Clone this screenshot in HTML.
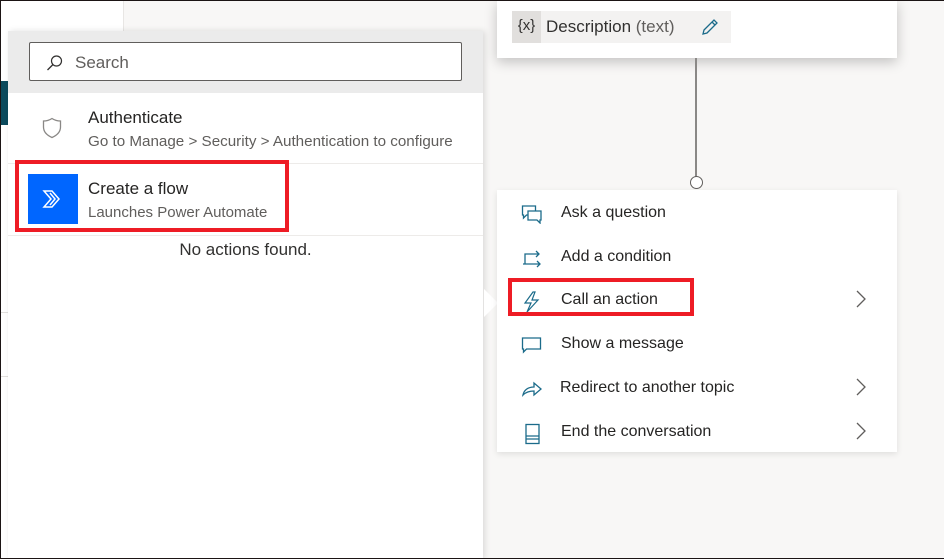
<!DOCTYPE html>
<html><head><meta charset="utf-8"><style>
*{box-sizing:border-box;margin:0;padding:0}
body{width:944px;height:559px;overflow:hidden;position:relative;background:#f8f7f6;font-family:"Segoe UI","Liberation Sans",sans-serif;color:#323130}
.abs{position:absolute}
.frame{position:absolute;inset:0;border:1px solid #1b1414;border-right:none;pointer-events:none;z-index:20}
.item{position:absolute;left:0;width:400px;height:44px;font-size:16px;color:#252423}
.item span{position:absolute;left:64px;top:12px}
.item svg.ic{position:absolute;left:24px;top:12px}
.chev{position:absolute;left:358px;top:10px}
</style></head><body>
<div class="frame"></div>
<div class="abs" style="left:0;top:0;width:124px;height:559px;background:#fff;border-right:1px solid #e8e6e4"></div>
<div class="abs" style="left:0;top:81px;width:8px;height:44px;background:#0b4a5c"></div>
<div class="abs" style="left:0;top:312px;width:8px;height:1px;background:#e1dfdd"></div>
<div class="abs" style="left:0;top:376px;width:8px;height:1px;background:#e1dfdd"></div>
<div class="abs" style="left:8px;top:31px;width:475px;height:528px;background:#fff;box-shadow:2px 0 6px rgba(0,0,0,.12)"></div>
<div class="abs" style="left:8px;top:31px;width:475px;height:62px;background:#ebebeb"></div>
<div class="abs" style="left:29px;top:42px;width:433px;height:39px;background:#fff;border:1px solid #605e5c;border-radius:2px"></div>
<svg class="abs" style="left:46px;top:54px" width="18" height="18" viewBox="0 0 18 18"><circle cx="10.5" cy="7" r="5" fill="none" stroke="#323130" stroke-width="1.2"/><path d="M7 10.5L1.5 16" stroke="#323130" stroke-width="1.3"/></svg>
<div class="abs" style="left:75px;top:53px;font-size:17px;color:#605e5c">Search</div>
<svg class="abs" style="left:42px;top:117px" width="20" height="22" viewBox="0 0 20 22"><path d="M10 1.5C7 3.5 4.5 4 1.5 4v6c0 5 4 8.5 8.5 10.5 4.5-2 8.5-5.5 8.5-10.5V4C15.5 4 13 3.5 10 1.5z" fill="none" stroke="#8a8886" stroke-width="1.3"/></svg>
<div class="abs" style="left:88px;top:108px;font-size:17px;color:#252423">Authenticate</div>
<div class="abs" style="left:88px;top:133px;font-size:15.2px;color:#605e5c">Go to Manage &gt; Security &gt; Authentication to configure</div>
<div class="abs" style="left:8px;top:163px;width:475px;height:1px;background:#edebe9"></div>
<div class="abs" style="left:28px;top:174px;width:50px;height:50px;background:#0066ff"></div>
<svg class="abs" style="left:42px;top:189px" width="22" height="20" viewBox="0 0 22 20"><path d="M2 2h8l7 8-7 8H2l7-8z" fill="none" stroke="#fff" stroke-width="1.5"/><path d="M8 4l5 6-5 6" fill="none" stroke="#fff" stroke-width="1.5"/></svg>
<div class="abs" style="left:88px;top:179px;font-size:17px;color:#252423">Create a flow</div>
<div class="abs" style="left:88px;top:204px;font-size:15px;color:#605e5c">Launches Power Automate</div>
<div class="abs" style="left:8px;top:235px;width:475px;height:1px;background:#edebe9"></div>
<div class="abs" style="left:8px;top:240px;width:475px;text-align:center;font-size:17px;color:#323130">No actions found.</div>
<div class="abs" style="left:15px;top:160px;width:274px;height:72px;border:4px solid #ee1c25"></div>
<div class="abs" style="left:484px;top:289px;width:0;height:0;border-top:14px solid transparent;border-bottom:14px solid transparent;border-left:14px solid #fff"></div>
<div class="abs" style="left:497px;top:0;width:400px;height:58px;background:#fff;box-shadow:0 4px 12px rgba(0,0,0,.22)"></div>
<div class="abs" style="left:512px;top:11px;width:219px;height:32px;background:#f3f2f1"></div>
<div class="abs" style="left:512px;top:11px;width:29px;height:32px;background:#e1dfdd;font-size:15px;text-align:center;line-height:30px;color:#323130">{x}</div>
<div class="abs" style="left:546px;top:17px;font-size:17px;color:#323130">Description <span style="color:#605e5c">(text)</span></div>
<svg class="abs" style="left:700px;top:17px" width="20" height="20" viewBox="0 0 20 20"><path d="M3 17l1-4L14 3l3 3L7 16z M12 5l3 3" fill="none" stroke="#1b6b8a" stroke-width="1.3"/></svg>
<div class="abs" style="left:695px;top:58px;width:2px;height:119px;background:#8a8886"></div>
<div class="abs" style="left:690px;top:176px;width:13px;height:13px;border:1.3px solid #605e5c;border-radius:50%;background:#fff"></div>
<div class="abs" style="left:497px;top:190px;width:400px;height:262px;background:#fff;box-shadow:0 2px 6px rgba(0,0,0,.1)">
 <div class="item" style="top:2px"><svg class="ic" width="22" height="20" viewBox="0 0 22 20"><path d="M1.5 2h13v9h-9l-3 3v-3h-1z" fill="none" stroke="#1b6b8a" stroke-width="1.3"/><path d="M7 7h13v9h-1v3l-3-3H7z" fill="#fff" stroke="#1b6b8a" stroke-width="1.3"/></svg><span>Ask a question</span></div>
 <div class="item" style="top:46px"><svg class="ic" width="22" height="20" viewBox="0 0 22 20"><path d="M2 16h17M16 13l3 3-3 3M4 16V6h14M15 3l3 3-3 3" fill="none" stroke="#1b6b8a" stroke-width="1.3"/></svg><span>Add a condition</span></div>
 <div class="item" style="top:89px"><svg class="ic" width="22" height="22" viewBox="0 0 22 22"><path d="M12 1L4 12h6l-4 9 11-12h-6l3-8z" fill="none" stroke="#1b6b8a" stroke-width="1.2"/></svg><span>Call an action</span><svg class="chev" width="12" height="20" viewBox="0 0 12 20"><path d="M2 2l8 8-8 8" fill="none" stroke="#605e5c" stroke-width="1.3"/></svg></div>
 <div class="item" style="top:133px"><svg class="ic" width="22" height="20" viewBox="0 0 22 20"><path d="M1.5 3h18v11h-14l-3 3v-3h-1z" fill="none" stroke="#1b6b8a" stroke-width="1.3"/></svg><span>Show a message</span></div>
 <div class="item" style="top:177px"><svg class="ic" width="22" height="20" viewBox="0 0 22 20"><path d="M2 16c1-5 5-8 11-8V4l7 6-7 6v-4c-5 0-8 1-11 4z" fill="none" stroke="#1b6b8a" stroke-width="1.3"/></svg><span style="left:63px">Redirect to another topic</span><svg class="chev" width="12" height="20" viewBox="0 0 12 20"><path d="M2 2l8 8-8 8" fill="none" stroke="#605e5c" stroke-width="1.3"/></svg></div>
 <div class="item" style="top:221px"><svg class="ic" width="22" height="22" viewBox="0 0 22 22"><rect x="5" y="1.5" width="13" height="19" fill="none" stroke="#1b6b8a" stroke-width="1.3"/><path d="M5 13h13M5 16h13" stroke="#1b6b8a" stroke-width="1.3"/></svg><span>End the conversation</span><svg class="chev" width="12" height="20" viewBox="0 0 12 20"><path d="M2 2l8 8-8 8" fill="none" stroke="#605e5c" stroke-width="1.3"/></svg></div>
</div>
<div class="abs" style="left:508px;top:278px;width:186px;height:38px;border:4px solid #ee1c25"></div>
</body></html>
